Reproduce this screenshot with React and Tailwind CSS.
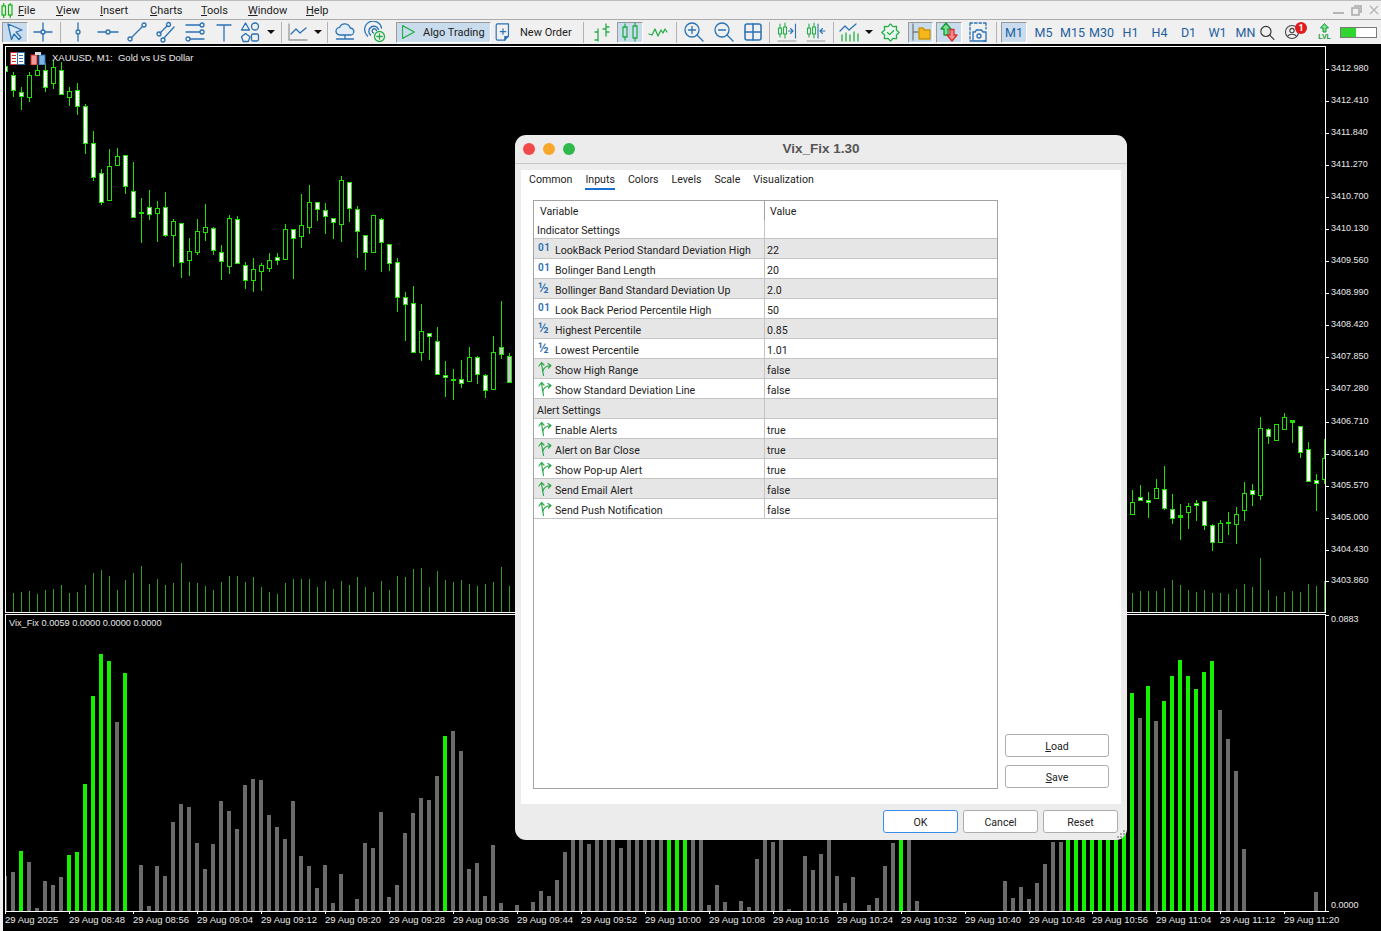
const BLUE = "#2a72b5";
const GREEN = "#27ae4a";
const CANDLE = "#1fe000";
const BAR_GREEN = "#14f000";
const BAR_GRAY = "#6b6b6b";

const menus = [
  ["F", "ile", "w-[38px]"],
  ["V", "iew", "w-[44px]"],
  ["I", "nsert", "w-[50px]"],
  ["C", "harts", "w-[51px]"],
  ["T", "ools", "w-[47px]"],
  ["W", "indow", "w-[58px]"],
  ["H", "elp", "w-[40px]"],
];

// candles left of the dialog: wick top, body top, body bottom, wick bottom, kind (3x zoom units)
const leftCandles = [
  [48,48,64,64,"w"],[66,76,122,140,"w"],[110,127,140,178,"w"],[66,76,143,156,"h"],[45,61,75,78,"h"],[40,61,113,126,"w"],
  [30,52,100,118,"h"],[35,61,134,135,"w"],[110,124,143,168,"h"],[98,121,170,195,"w"],[162,169,281,312,"w"],[243,280,383,392,"w"],
  [357,370,458,465,"w"],[297,349,452,452,"h"],[294,319,345,348,"h"],[316,316,410,432,"w"],[336,424,503,503,"w"],[444,487,489,579,"d"],
  [420,472,494,510,"w"],[453,475,491,576,"h"],[426,472,557,560,"w"],[507,514,555,651,"h"],[520,520,638,684,"w"],[564,604,632,678,"h"],
  [507,544,608,615,"h"],[462,532,548,573,"h"],[532,535,602,615,"w"],[585,607,635,690,"w"],[495,505,650,672,"h"],[498,508,641,641,"w"],
  [636,646,692,717,"w"],[624,658,692,726,"h"],[640,646,665,723,"h"],[609,631,656,666,"h"],[609,622,632,645,"w"],[522,538,627,627,"h"],
  [538,538,566,687,"w"],[432,526,560,594,"h"],[405,457,533,552,"h"],[457,457,479,513,"w"],[459,481,500,552,"w"],[505,505,518,567,"w"],
  [378,391,524,576,"h"],[397,397,476,516,"w"],[468,478,545,624,"w"],[556,556,608,660,"w"],[496,496,606,606,"h"],[505,508,578,666,"w"],
  [583,583,641,663,"w"],[624,637,743,786,"w"],[726,742,764,873,"w"],[708,760,908,908,"w"],[762,844,908,933,"h"],[850,850,860,930,"w"],
  [831,874,974,974,"w"],[933,976,983,1041,"w"],[957,987,989,1050,"d"],[930,988,1001,1014,"w"],[891,922,995,995,"h"],[918,922,974,1002,"w"],
  [972,976,1020,1044,"w"],[858,907,1019,1019,"h"],[753,892,914,927,"g"],[909,919,998,998,"g"],
];

const rightCandles = [
  [270,307,344,345,"h"],[255,292,302,303,"w"],[276,301,308,354,"w"],[237,265,296,296,"h"],[198,268,325,330,"w"],[282,328,356,372,"w"],
  [312,345,350,420,"d"],[309,319,338,387,"h"],[300,310,317,363,"w"],[304,304,377,390,"w"],[372,376,428,453,"w"],[360,370,428,429,"h"],
  [336,367,369,405,"d"],[321,343,374,432,"h"],[246,280,332,363,"h"],[252,271,284,318,"w"],[51,85,287,300,"h"],[84,88,110,132,"w"],
  [72,73,122,123,"h"],[39,52,89,89,"h"],[60,60,65,129,"d"],[78,79,157,174,"w"],[126,148,245,246,"w"],[222,241,250,333,"w"],[117,175,238,252,"h"],
];

const leftVolumes = [99,96,93,102,90,87,75,99,96,75,39,30,48,90,60,39,18,72,57,75,69,9,66,69,78,90,66,48,48,66,51,81,96,102,69,57,57,57,81,63,87,63,75,51,81,96,63,90,48,51,27,24,81,33,60,66,60,72,78,72,66,21,78];
const rightVolumes = [579,573,573,573,564,540,555,570,576,570,579,579,582,567,552,561,474,570,588,576,573,576,552,558,543];

// indicator bars: top in page px, G = green, n = gray; 0 = no bar
const barTops = [
  [948,"n"],[936,"n"],[873,"G"],[906,"n"],[1044,"n"],[963,"n"],[975,"n"],[951,"n"],[885,"G"],[876,"G"],[672,"G"],[408,"G"],[282,"G"],[303,"G"],[486,"n"],[339,"G"],
  [0,"n"],[915,"n"],[1038,"n"],[918,"n"],[948,"n"],[786,"n"],[732,"n"],[741,"n"],[849,"n"],[927,"n"],[852,"n"],[723,"n"],[753,"n"],[807,"n"],[675,"n"],[657,"n"],
  [660,"n"],[765,"n"],[801,"n"],[837,"n"],[723,"n"],[888,"n"],[918,"n"],[984,"n"],[915,"n"],[1029,"n"],[942,"n"],[0,"n"],[1017,"n"],[849,"n"],[864,"n"],[756,"n"],
  [1011,"n"],[975,"n"],[819,"n"],[759,"n"],[714,"n"],[720,"n"],[648,"n"],[528,"G"],[513,"n"],[573,"n"],[927,"n"],[909,"n"],[1008,"n"],[855,"n"],[1029,"n"],[0,"n"],[1035,"n"],
];
const midBars = [
  [0,"n"],[216,"n"],[183,"n"],[198,"n"],[150,"n"],[66,"n"],[-30,"n"],[-30,"n"],[42,"n"],[-30,"n"],[-30,"n"],[-30,"n"],[54,"n"],[-30,"n"],[-30,"n"],[-30,"n"],[-30,"n"],[-30,"n"],
  [-30,"G"],[-30,"G"],[-30,"G"],[-30,"n"],[-30,"n"],[225,"n"],[165,"n"],[216,"n"],[0,"n"],[213,"n"],[231,"n"],[87,"n"],[-30,"n"],[36,"n"],[-30,"n"],[237,"n"],[0,"n"],
  [78,"n"],[120,"n"],[72,"n"],[-30,"n"],[138,"n"],[219,"n"],[141,"n"],[0,"n"],[225,"n"],[204,"n"],[108,"n"],[39,"n"],[-30,"G"],[-30,"n"],[213,"n"],
  [0,"n"],[0,"n"],[0,"n"],[0,"n"],[0,"n"],[0,"n"],[0,"n"],[0,"n"],[0,"n"],[0,"n"],
  [153,"n"],[204,"n"],[171,"n"],[207,"n"],[159,"n"],[102,"n"],[36,"n"],[36,"n"],
];
const greenRun = ["G","G","G","G","G","G","G","n","G","G","G","n"];
const rightBars = [
  [1124,-30,"G"],[1132,693,"G"],[1140,718,"n"],[1148,686,"G"],[1156,721,"n"],[1164,701,"G"],[1172,676,"G"],[1180,660,"G"],[1188,676,"G"],[1196,689,"G"],
  [1204,672,"G"],[1212,661,"G"],[1220,710,"n"],[1228,739,"n"],[1236,771,"n"],[1244,849,"n"],[1316,892,"n"],
];

const prices = [
  ["3412.980",68],["3412.410",100],["3411.840",132],["3411.270",164],["3410.700",196],["3410.130",228],["3409.560",260],["3408.990",292],["3408.420",324],
  ["3407.850",356],["3407.280",388],["3406.710",421],["3406.140",453],["3405.570",485],["3405.000",517],["3404.430",549],["3403.860",580],
];

const times = ["29 Aug 2025","29 Aug 08:48","29 Aug 08:56","29 Aug 09:04","29 Aug 09:12","29 Aug 09:20","29 Aug 09:28","29 Aug 09:36","29 Aug 09:44","29 Aug 09:52","29 Aug 10:00","29 Aug 10:08","29 Aug 10:16","29 Aug 10:24","29 Aug 10:32","29 Aug 10:40","29 Aug 10:48","29 Aug 10:56","29 Aug 11:04","29 Aug 11:12","29 Aug 11:20"];

const rows = [
  ["int","LookBack Period Standard Deviation High","22"],
  ["int","Bolinger Band Length","20"],
  ["half","Bollinger Band Standard Deviation Up","2.0"],
  ["int","Look Back Period Percentile High","50"],
  ["half","Highest Percentile","0.85"],
  ["half","Lowest Percentile","1.01"],
  ["bool","Show High Range","false"],
  ["bool","Show Standard Deviation Line","false"],
  ["head","Alert Settings",""],
  ["bool","Enable Alerts","true"],
  ["bool","Alert on Bar Close","true"],
  ["bool","Show Pop-up Alert","true"],
  ["bool","Send Email Alert","false"],
  ["bool","Send Push Notification","false"],
];

const sunken = "bg-[#c9dcee] border border-t-[#999999] border-l-[#999999] border-r-white border-b-white";

// notched outline of the green badge in the toolbar
const sealPoints = Array.from({ length: 16 }, (_, i) => {
  const r = i % 2 ? 7.4 : 10;
  const a = (i * Math.PI) / 8 - Math.PI / 2;
  return `${(11 + r * Math.cos(a)).toFixed(1)},${(11 + r * Math.sin(a)).toFixed(1)}`;
}).join(" ");

function Ico({ children, size = 22, stroke = BLUE, sw = 1.3 }) {
  return (
    <svg width={size} height={size} viewBox="0 0 22 22" fill="none" stroke={stroke} strokeWidth={sw} strokeLinecap="round" strokeLinejoin="round">
      {children}
    </svg>
  );
}

function Tool({ w, active, children }) {
  return (
    <div className={`${w} h-[21px] shrink-0 flex items-center justify-center ${active ? sunken : ""}`}>
      {children}
    </div>
  );
}

function Sep({ w }) {
  return (
    <div className={`${w} h-[21px] shrink-0 flex justify-center`}>
      <div className="w-px h-full bg-[#b4b4b4]" />
    </div>
  );
}

function Caret({ w }) {
  return (
    <Tool w={w}>
      <svg width="8" height="4" viewBox="0 0 8 4"><path d="M0 0h8L4 4z" fill="#111" /></svg>
    </Tool>
  );
}

function Candles({ list, xOf, yOf }) {
  return list.map((c, i) => {
    const x = xOf(i);
    const top = Math.round(yOf(c[1]));
    const h = Math.max(Math.round((c[2] - c[1]) / 3) + 1, 2);
    const inner = c[4] === "w" ? "#ffffff" : c[4] === "g" ? "#c8c8c8" : "#000000";
    return (
      <g key={i}>
        <rect x={x} y={Math.round(yOf(c[0]))} width="1" height={Math.round((c[3] - c[0]) / 3)} fill={CANDLE} />
        <rect x={x - 2} y={top} width="5" height={h} fill={CANDLE} />
        {c[4] !== "d" && h > 2 && <rect x={x - 1} y={top + 1} width="3" height={h - 2} fill={inner} />}
      </g>
    );
  });
}

function MainPlot() {
  return (
    <svg className="block" width="1319" height="565" viewBox="6 47 1319 565" shapeRendering="crispEdges">
      {leftVolumes.map((t, i) => (
        <rect key={i} x={13 + i * 8} y={Math.round(560 + t / 3)} width="1" height={Math.round(612 - (560 + t / 3))} fill="#2f9e22" />
      ))}
      {rightVolumes.map((t, i) => (
        <rect key={i} x={1132 + i * 8} y={Math.round(400 + t / 3)} width="1" height={Math.round(612 - (400 + t / 3))} fill="#2f9e22" />
      ))}
      <Candles list={leftCandles} xOf={(i) => 5 + i * 8} yOf={(v) => 50 + v / 3} />
      <Candles list={rightCandles} xOf={(i) => 1132 + i * 8} yOf={(v) => 400 + v / 3} />
    </svg>
  );
}

function IndicatorPlot() {
  const bar = (x, y, kind, key) => (
    <rect key={key} x={x} y={y} width="4" height={911 - y} fill={kind === "G" ? BAR_GREEN : BAR_GRAY} />
  );
  return (
    <svg className="block" width="1319" height="296" viewBox="6 615 1319 296" shapeRendering="crispEdges">
      {barTops.map(([t, k], i) => (t ? bar(3 + i * 8, Math.round(560 + t / 3), k, "a" + i) : null))}
      {midBars.map(([t, k], i) => (t !== 0 ? bar(523 + i * 8, Math.round(830 + t / 3), k, "b" + i) : null))}
      {greenRun.map((k, i) => bar(1066 + i * 8 * 1, 800, k, "g" + i))}
      {rightBars.map(([x, y, k], i) => bar(x - 2, y < 0 ? 800 : y, k, "r" + i))}
    </svg>
  );
}

function BoolIcon() {
  return (
    <svg width="14" height="16" viewBox="0 0 14 16" fill="none" stroke="#2ca84a" strokeWidth="1.2" strokeLinecap="round" strokeLinejoin="round">
      <path d="M5.5 14.5L3.5 2.5M1 5l2.500-3.500L6 4" />
      <path d="M4.800 10c1-3 3-5 8-5.500M10 2.500l3 2-2.500 2.500" />
    </svg>
  );
}

function RowIcon({ type }) {
  if (type === "int") return <span className="text-[10px] leading-[12px] font-semibold text-[#2a6eb0] -mt-[5px] tracking-[0.5px]">01</span>;
  if (type === "half") return <span className="text-[14px] leading-[14px] font-medium text-[#2a6eb0] -mt-[5px]">½</span>;
  return <span className="-mt-[4px] flex"><BoolIcon /></span>;
}

function DlgButton({ w, primary, children }) {
  return (
    <button className={`${w} h-[23px] pt-[2px] rounded-[3px] bg-white text-[10.600px] text-[#222] border ${primary ? "border-[#3b8fea]" : "border-[#adadad]"}`}>
      {children}
    </button>
  );
}

function Dialog() {
  return (
    <div className="absolute left-[515px] top-[135px] w-[612px] h-[705px] rounded-[11px] bg-[#ececec] flex flex-col overflow-hidden">
      <div className="h-[29px] shrink-0 border-b border-[#c8c8c8] grid grid-cols-[1fr_auto_1fr] items-center px-2">
        <div className="flex gap-2">
          <span className="w-3 h-3 rounded-full bg-[#f1484a]" />
          <span className="w-3 h-3 rounded-full bg-[#f8a72a]" />
          <span className="w-3 h-3 rounded-full bg-[#2fb94a]" />
        </div>
        <span className="font-['Liberation_Sans'] font-bold text-[13.500px] text-[#555555]">Vix_Fix 1.30</span>
        <span />
      </div>

      <div className="flex-1 mx-[6px] mt-[6px] bg-white flex flex-col min-h-0">
        <div className="h-[30px] shrink-0 flex gap-[13px] pl-2 text-[10.600px] text-[#222]">
          {["Common", "Inputs", "Colors", "Levels", "Scale", "Visualization"].map((t) => (
            <div key={t} className="h-[20px] pt-px flex flex-col items-center">
              <span className="leading-[17px]">{t}</span>
              {t === "Inputs" && <span className="w-full h-[2px] bg-[#1a6fd0]" />}
            </div>
          ))}
        </div>

        <div className="flex-1 flex pl-3 pb-[15px] min-h-0">
          <div className="w-[465px] border border-[#a3a3a3] text-[10.600px] text-[#222]">
            <div className="h-[19px] flex leading-[21px]">
              <div className="w-[231px] pl-[6px] border-r border-[#a3a3a3]">Variable</div>
              <div className="pl-[5px]">Value</div>
            </div>
            <div className="h-[19px] flex leading-[21px] border-b border-[#c4c4c4]">
              <div className="w-[231px] pl-[3px] border-r border-[#c4c4c4]">Indicator Settings</div>
            </div>
            {rows.map(([type, name, value], i) => (
              <div key={name} className={`h-[20px] flex items-center border-b border-[#c4c4c4] ${i % 2 === 0 ? "bg-[#e6e6e6]" : "bg-white"}`}>
                <div className="w-[231px] h-full pt-[4px] flex items-center border-r border-[#c4c4c4]">
                  {type === "head" ? (
                    <span className="pl-[3px]">{name}</span>
                  ) : (
                    <>
                      <span className="w-[21px] pl-[4px] shrink-0 flex items-center"><RowIcon type={type} /></span>
                      <span className="whitespace-nowrap">{name}</span>
                    </>
                  )}
                </div>
                <div className="pl-[2px] pt-[4px]">{value}</div>
              </div>
            ))}
          </div>

          <div className="w-[104px] ml-[7px] flex flex-col justify-end gap-2 pb-px">
            <DlgButton w="w-full"><u>L</u>oad</DlgButton>
            <DlgButton w="w-full"><u>S</u>ave</DlgButton>
          </div>
        </div>
      </div>

      <div className="h-[36px] shrink-0 flex justify-end items-start gap-[5px] pt-[6px] pr-[9px]">
        <DlgButton w="w-[75px]" primary>OK</DlgButton>
        <DlgButton w="w-[75px]">Cancel</DlgButton>
        <DlgButton w="w-[75px]">Reset</DlgButton>
      </div>

      <svg className="absolute right-[1px] bottom-[1px]" width="9" height="9" viewBox="0 0 9 9" fill="#a8a8a8">
        <rect x="6" y="0" width="2" height="2" /><rect x="3" y="3" width="2" height="2" /><rect x="6" y="3" width="2" height="2" />
        <rect x="0" y="6" width="2" height="2" /><rect x="3" y="6" width="2" height="2" /><rect x="6" y="6" width="2" height="2" />
      </svg>
    </div>
  );
}

function Toolbar() {
  return (
    <div className="h-[24px] shrink-0 bg-[#f0f0f0] flex items-center pl-[2px] text-[11px] text-[#222]">
      <Tool w="w-[26px]" active>
        <Ico><path d="M4 3l14 6-6 2 5 5.500-2 2-5-5.500-2.500 5.500z" fill="#dbe8f5" /></Ico>
      </Tool>
      <Tool w="w-[30px]"><Ico><path d="M11 2v7M11 13v7M2 11h7M13 11h7" /><circle cx="11" cy="11" r="2" /></Ico></Tool>
      <Sep w="w-[5px]" />
      <Tool w="w-[30px]"><Ico><path d="M11 2v7M11 13v7" /><circle cx="11" cy="11" r="2" /></Ico></Tool>
      <Tool w="w-[29px]"><Ico><path d="M1 11h8M13 11h8" /><circle cx="11" cy="11" r="2" /></Ico></Tool>
      <Tool w="w-[29px]"><Ico><path d="M5.500 16.500l11-11" /><circle cx="4" cy="18" r="2" /><circle cx="18" cy="4" r="2" /></Ico></Tool>
      <Tool w="w-[29px]"><Ico><path d="M5 12l7-7M9 17l10-11" /><circle cx="4" cy="13" r="2" /><circle cx="13.500" cy="3.500" r="2" /><circle cx="8" cy="19" r="2" /></Ico></Tool>
      <Tool w="w-[29px]"><Ico><path d="M2 4h14M2 11h14M6 18h14" /><circle cx="18" cy="11" r="2" /><circle cx="4" cy="18" r="2" /><circle cx="18" cy="4" r="2" /></Ico></Tool>
      <Tool w="w-[29px]"><Ico><path d="M4 4h14M11 4v16" /></Ico></Tool>
      <Tool w="w-[24px]"><Ico><path d="M6.500 2L10.500 9h-8z" /><circle cx="16" cy="5.500" r="3.500" /><path d="M6.500 12.500l4.500 3.200-1.700 4.800H4.200l-1.700-4.800z" /><rect x="12.500" y="13" width="7" height="7" rx="1.500" /></Ico></Tool>
      <Caret w="w-[17px]" />
      <Sep w="w-[5px]" />
      <Tool w="w-[27px]"><Ico><path d="M2 3v16h18" stroke="#9a9a9a" /><path d="M4 13l5-5 4 4 6-5" /></Ico></Tool>
      <Caret w="w-[13px]" />
      <Sep w="w-[6px]" />
      <Tool w="w-[30px]"><Ico><path d="M6 14a3.800 3.800 0 0 1-.4-7.600 5.600 5.600 0 0 1 10.600.6A3.500 3.500 0 0 1 16.500 14zM11 14v4M2.500 18h17" fill="#e2ecf6" /></Ico></Tool>
      <Tool w="w-[30px]"><Ico><path d="M3.500 15a8.500 8.500 0 1 1 14-8M6.500 14a5 5 0 1 1 8-5.500M9.500 12a2.200 2.200 0 1 1 3-2.500" /><circle cx="15.500" cy="15.500" r="5" stroke={GREEN} fill="#f0f0f0" /><path d="M15.500 12.800v5.400M12.800 15.500h5.400" stroke={GREEN} /></Ico></Tool>
      <div className="w-[6px] shrink-0" />
      <div className={`w-[95px] h-[21px] shrink-0 flex items-center ${sunken}`}>
        <div className="w-[21px] flex justify-center"><Ico size={20} stroke={GREEN}><path d="M5 4l13 7-13 7z" /></Ico></div>
        <span className="ml-[5px] pt-[3px] whitespace-nowrap">Algo Trading</span>
      </div>
      <div className="w-[90px] h-[21px] shrink-0 flex items-center pl-[2px]">
        <Ico size={20}><path d="M5 2h12v13l-4 5H5a1.500 1.500 0 0 1-1.500-1.500v-15A1.500 1.500 0 0 1 5 2zM11 7.500v6M8 10.500h6" /><path d="M13 20v-4h4" fill={BLUE} /></Ico>
        <span className="ml-[7px] pt-[3px] whitespace-nowrap">New Order</span>
      </div>
      <Sep w="w-[5px]" />
      <Tool w="w-[31px]"><Ico stroke={GREEN}><path d="M7 8v12M7 11H4M4 19h3M15 3v12M15 6h3M15 11h3M12 8h3" /></Ico></Tool>
      <Tool w="w-[26px]" active><Ico stroke={GREEN} sw={1.3}><rect x="4" y="6" width="4" height="10" /><path d="M6 3v3M6 16v3" /><rect x="14" y="5" width="4" height="12" /><path d="M16 2v3M16 17v3" /></Ico></Tool>
      <Tool w="w-[30px]"><Ico stroke={GREEN}><path d="M2 13l3 1 3-6 3 7 3-6 2 3 2-4 2 3" /></Ico></Tool>
      <Sep w="w-[6px]" />
      <Tool w="w-[30px]"><Ico><circle cx="9" cy="9" r="7" /><path d="M14 14l6 6M9 5.500v7M5.500 9h7" /></Ico></Tool>
      <Tool w="w-[29px]"><Ico><circle cx="9" cy="9" r="7" /><path d="M14 14l6 6M5.500 9h7" /></Ico></Tool>
      <Tool w="w-[29px]"><Ico sw={1.5}><rect x="3" y="3" width="16" height="16" rx="2" /><path d="M11 3v16M3 11h16" /></Ico></Tool>
      <Sep w="w-[5px]" />
      <Tool w="w-[29px]"><Ico sw={1.1}><path d="M4 3v4M4 13v3M9 2v4M9 13v4" stroke={GREEN} /><rect x="2.500" y="7" width="3" height="6" stroke={GREEN} /><rect x="7.500" y="6" width="3" height="7" stroke={GREEN} /><path d="M12.500 10h4M14.500 7.500l2.500 2.500-2.500 2.500M19.500 3v14" /><path d="M2 20h18" stroke="#9a9a9a" /></Ico></Tool>
      <Tool w="w-[29px]"><Ico sw={1.1}><path d="M4 3v4M4 13v3M9 2v4M9 13v4" stroke={GREEN} /><rect x="2.500" y="7" width="3" height="6" stroke={GREEN} /><rect x="7.500" y="6" width="3" height="7" stroke={GREEN} /><path d="M13 3v14M15 10h5M17.500 7.500L15 10l2.500 2.500" /><path d="M2 20h18" stroke="#9a9a9a" /></Ico></Tool>
      <Sep w="w-[6px]" />
      <Tool w="w-[26px]"><Ico><path d="M2 10l5-5 4 4 7-6" /><path d="M4 20v-6M8 20v-8M12 20v-6M16 20v-9M20 20v-7" stroke={GREEN} /></Ico></Tool>
      <Caret w="w-[14px]" />
      <Tool w="w-[29px]"><Ico size={19} stroke={GREEN} sw={1.5}><polygon points={sealPoints} fill="#eaf7ee" /><path d="M7.500 11l2.500 2.500 4.500-4.500" /></Ico></Tool>
      <div className="w-[3px] shrink-0" />
      <Tool w="w-[25px]" active>
        <Ico stroke="#7a7a7a"><path d="M3 3v16M3 11h5" /><path d="M9 7h4l1.500 2H20v9H9z" fill="#f5b818" stroke="#c9920c" /></Ico>
      </Tool>
      <div className="w-[3px] shrink-0" />
      <Tool w="w-[26px]" active>
        <Ico stroke="#159a3c"><path d="M8 2l5 6h-3v6H6V8H3z" fill="#7be08e" /><path d="M14 20l-5-6h3V8.500h4V14h3z" fill="#f58a8a" stroke="#d9302c" /></Ico>
      </Tool>
      <Tool w="w-[32px]"><Ico><path d="M3 2h16M3 20h2M17 20h2M3 2v18M19 2v6" strokeDasharray="2.500 2" /><path d="M6 11h2l1.500-2h5l1.500 2h3v9H6z" /><circle cx="12" cy="15" r="2" /></Ico></Tool>
      <Sep w="w-[5px]" />
      <div className="w-[2px] shrink-0" />
      <div className={`w-[26px] h-[21px] pt-[2px] shrink-0 flex items-center justify-center text-[12.500px] text-[#1f5f9f] ${sunken}`}>M1</div>
      <div className="w-[2px] shrink-0" />
      {["M5", "M15", "M30", "H1", "H4", "D1", "W1"].map((t) => (
        <div key={t} className="w-[29px] pt-[2px] shrink-0 text-center text-[12.500px] text-[#1f5f9f] whitespace-nowrap">{t}</div>
      ))}
      <div className="w-[27px] pt-[2px] shrink-0 text-center text-[12.500px] text-[#1f5f9f]">MN</div>
      <div className="w-[16px] shrink-0 flex justify-center"><Ico size={17} stroke="#333" sw={1.6}><circle cx="9.500" cy="9.500" r="7" /><path d="M15 15l5.500 5.500" /></Ico></div>
      <div className="w-[34px] shrink-0 flex justify-center relative">
        <Ico size={16} stroke="#444" sw={1.5}><circle cx="11" cy="11" r="9" /><circle cx="11" cy="9" r="3" /><path d="M5 17c2-4 10-4 12 0" /></Ico>
        <span className="absolute left-[20px] -top-[2px] w-[12px] h-[12px] rounded-full bg-[#e01b1b] text-white text-[9px] leading-[12px] text-center font-bold">1</span>
      </div>
      <div className="w-[31px] shrink-0 flex flex-col items-center">
        <svg width="9" height="10" viewBox="0 0 9 10"><path d="M4.500 0.500L8.500 5H6v4H3V5H.5z" fill="#7be08e" stroke="#159a3c" /></svg>
        <span className="text-[7px] leading-[8px] font-bold text-[#159a3c] font-['Liberation_Sans']">LVL</span>
      </div>
      <div className="w-[37px] h-[11px] shrink-0 border border-[#7a7a7a] bg-white">
        <div className="w-[15px] h-full bg-[#2fd62f]" />
      </div>
    </div>
  );
}

export default function App() {
  return (
    <div className="relative w-[1381px] h-[931px] overflow-hidden flex flex-col bg-[#f0f0f0] font-['Roboto']">
      {/* menu bar */}
      <div className="h-[20px] shrink-0 flex items-center border-t border-b border-t-[#bdbdbd] border-b-[#acacac] bg-[#f0f0f0] text-[11px] text-[#222]">
        <div className="w-[18px] pl-[1px] shrink-0">
          <svg width="12" height="15" viewBox="0 0 12 15" fill="none" stroke="#12b312" strokeWidth="1.2">
            <rect x="1" y="3" width="3.500" height="9" /><path d="M2.700 0v3M2.700 12v3" />
            <rect x="7.500" y="2" width="3.500" height="10" /><path d="M9.200 0v2M9.200 12v3" />
          </svg>
        </div>
        {menus.map(([a, b, w]) => (
          <div key={a} className={`${w} pt-[3px] shrink-0`}><u>{a}</u>{b}</div>
        ))}
        <div className="ml-auto flex items-center gap-[7px] pr-[2px]">
          <span className="w-[11px] h-[2px] mt-[6px] bg-[#b5b5b5]" />
          <svg width="11" height="11" viewBox="0 0 11 11" fill="none" stroke="#a8a8a8" strokeWidth="1.500"><rect x="1" y="3" width="7" height="7" /><path d="M3 1h7v7" /></svg>
          <svg width="10" height="10" viewBox="0 0 10 10" stroke="#b5b5b5" strokeWidth="1.300"><path d="M1 1l8 8M9 1l-8 8" /></svg>
        </div>
      </div>

      <Toolbar />

      {/* chart window */}
      <div className="flex-1 ml-[3px] bg-black pt-[2px] pl-[2px] flex flex-col min-h-0 text-[#e8e8e8] text-[9.500px] font-['Liberation_Sans']">
        <div className="flex h-[567px] shrink-0">
          <div className="relative w-[1321px] shrink-0 border border-white">
            <MainPlot />
            <div className="absolute left-[4px] top-[4px] flex items-center">
              <svg width="16" height="13" viewBox="0 0 16 13">
                <rect x=".5" y=".5" width="7" height="12" fill="#fff" stroke="#d9302c" />
                <rect x="7.500" y=".5" width="7" height="12" fill="#fff" stroke="#2a72b5" />
                <path d="M2 3.500h4M2 6.500h4M2 9.500h4" stroke="#d9302c" />
                <path d="M9 3.500h4M9 6.500h4M9 9.500h4" stroke="#2a72b5" />
              </svg>
              <svg className="ml-[4px]" width="17" height="13" viewBox="0 0 17 13">
                <rect x="1" y="3" width="6" height="10" fill="#f29a9a" stroke="#d9302c" />
                <rect x="9" y="3" width="6" height="10" fill="#7fb6e8" stroke="#2a72b5" />
                <rect x="5" y="0" width="6" height="3" fill="#dddddd" />
              </svg>
              <span className="ml-[5px] whitespace-pre">XAUUSD, M1:  Gold vs US Dollar</span>
            </div>
          </div>
          <div className="flex-1 flex flex-col text-[9px]">
            {prices.map(([p, c], i) => (
              <div key={p} className="h-[12px] flex items-center shrink-0" style={{ marginTop: i === 0 ? 17 : c - prices[i - 1][1] - 12 }}>
                <span className="w-[3px] h-px bg-white" />
                <span className="ml-[2px]">{p}</span>
              </div>
            ))}
          </div>
        </div>

        <div className="flex h-[298px] shrink-0 mt-px">
          <div className="relative w-[1321px] shrink-0 border-l border-r border-t border-b border-white">
            <IndicatorPlot />
            <span className="absolute left-[3px] top-[2px] whitespace-nowrap text-[9.200px]">Vix_Fix 0.0059 0.0000 0.0000 0.0000</span>
          </div>
          <div className="flex-1 flex flex-col justify-between text-[9px]">
            <div className="h-[13px] flex items-start">
              <span className="w-[3px] h-px mt-[1px] bg-white" />
              <span className="ml-[2px] leading-[12px] -mt-px">0.0883</span>
            </div>
            <div className="h-[13px] flex items-start">
              <span className="w-[3px] h-px mt-[12px] bg-white" />
              <span className="ml-[2px] leading-[12px]">0.0000</span>
            </div>
          </div>
        </div>

        <div className="flex h-[19px] shrink-0">
          {times.map((t, i) => (
            <div key={t} className={`${i === 16 ? "w-[63px]" : "w-[64px]"} shrink-0 flex flex-col`}>
              <span className="w-px h-[2px] bg-white" />
              <span className="leading-[12px] whitespace-nowrap">{t}</span>
            </div>
          ))}
        </div>
      </div>

      <Dialog />
    </div>
  );
}
